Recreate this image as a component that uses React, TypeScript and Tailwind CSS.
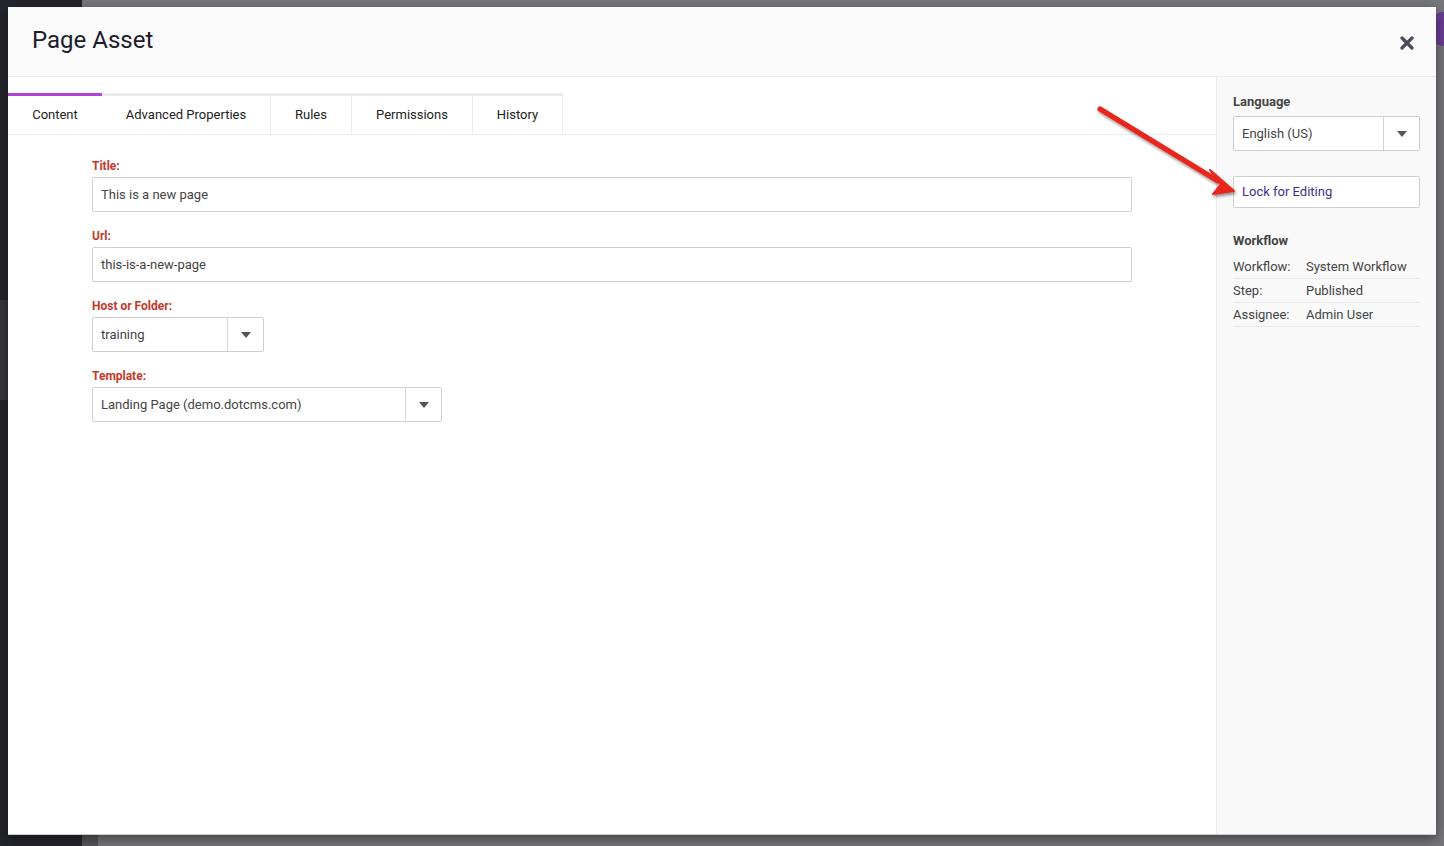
import React from 'react';

const font = { fontFamily: 'Roboto, "Noto Sans", sans-serif' };

const Caret = () => (
  <svg width="10" height="6" viewBox="0 0 10 6" className="fill-[#555]">
    <path d="M0 0h10L5 6z" />
  </svg>
);

const Field = ({ label, children }: { label: string; children: React.ReactNode }) => (
  <div className="mb-[17px]">
    <div className="text-[12px] font-bold text-[#c7392b] leading-[14px] mb-[4px]">{label}</div>
    {children}
  </div>
);

const TextInput = ({ value }: { value: string }) => (
  <div className="h-[35px] w-[1040px] border border-[#cfcfcf] rounded-[2px] bg-white flex items-center px-[8px] text-[13px] text-[#444]">
    {value}
  </div>
);

const Select = ({ value, width, btn }: { value: string; width: string; btn: string }) => (
  <div className={`h-[35px] ${width} border border-[#cfcfcf] rounded-[2px] bg-white flex text-[13px] text-[#444]`}>
    <div className="flex-1 flex items-center px-[8px]">{value}</div>
    <div className={`${btn} border-l border-[#d6d6d6] flex items-center justify-center`}>
      <Caret />
    </div>
  </div>
);

const tabs = ['Content', 'Advanced Properties', 'Rules', 'Permissions', 'History'];
const tabW = ['w-[94px]', 'w-[169px]', 'w-[81px]', 'w-[121px]', 'w-[90px]'];

const App = () => {
  return (
    <div className="relative w-[1444px] h-[846px] overflow-hidden" style={font}>
      {/* backdrop */}
      <div className="absolute inset-0 flex">
        <div className="w-[82px] bg-[#25252d]" />
        <div className="flex-1 bg-[#77777c]" />
      </div>
      <div className="absolute left-0 top-[300px] w-[8px] h-[100px] bg-[#35353b]" />
      <div className="absolute right-[-14px] top-[12px] w-[28px] h-[34px] rounded-full bg-[#6b3f94]" />
      <div className="absolute left-[82px] bottom-0 w-[16px] h-[11px] bg-[#58585c]" />

      {/* dialog */}
      <div className="absolute left-[8px] top-[7px] w-[1428px] h-[828px] bg-white flex flex-col shadow-[0_4px_12px_rgba(0,0,0,0.45)] border-b border-[#ccc]">
        <div className="h-[70px] shrink-0 bg-[#fafafa] border-b border-[#ececec] flex items-center justify-between pl-[24px] pr-[22px]">
          <div className="text-[24px] text-[#1c1c2c] leading-none pb-[4px]">Page Asset</div>
          <svg width="14" height="14" viewBox="0 0 14 14" className="stroke-[#4c4c58] mt-[3px]">
            <path d="M2 2L12 12M12 2L2 12" strokeWidth="3.2" strokeLinecap="round" />
          </svg>
        </div>
        <div className="flex flex-1">
          <div className="flex-1 bg-white">
            <div className="mt-[16px] border-b border-[#ececec] flex">
              {tabs.map((t, i) => (
                <div
                  key={t}
                  className={`${tabW[i]} h-[41px] border-t-[3px] ${i === 0 ? 'border-t-[#b044d8]' : 'border-t-[#ebebeb] border-r border-r-[#ececec]'} flex items-center justify-center text-[13px] text-[#222]`}
                >
                  {t}
                </div>
              ))}
            </div>
            <div className="pl-[84px] pt-[24px]">
              <Field label="Title:">
                <TextInput value="This is a new page" />
              </Field>
              <Field label="Url:">
                <TextInput value="this-is-a-new-page" />
              </Field>
              <Field label="Host or Folder:">
                <Select value="training" width="w-[172px]" btn="w-[36px]" />
              </Field>
              <Field label="Template:">
                <Select value="Landing Page (demo.dotcms.com)" width="w-[350px]" btn="w-[36px]" />
              </Field>
            </div>
          </div>
          <div className="w-[220px] bg-[#f9f9f9] border-l border-[#ececec] pl-[16px] pr-[16px] pt-[17px] text-[#444]">
            <div className="text-[13px] leading-[15px] font-bold text-[#444] mb-[7px]">Language</div>
            <Select value="English (US)" width="w-[187px]" btn="w-[36px]" />
            <div className="mt-[25px] h-[32px] w-[187px] border border-[#cfcfcf] rounded-[2px] bg-white flex items-center px-[8px] text-[13px] text-[#3f2e8c]">
              Lock for Editing
            </div>
            <div className="mt-[25px] text-[13px] leading-[15px] font-bold text-[#444] mb-[7px]">Workflow</div>
            {[
              ['Workflow:', 'System Workflow'],
              ['Step:', 'Published'],
              ['Assignee:', 'Admin User'],
            ].map(([k, v]) => (
              <div key={k} className="flex h-[24px] items-center border-b border-[#e8e8e8] text-[13px] text-[#444] w-[187px]">
                <div className="w-[73px]">{k}</div>
                <div>{v}</div>
              </div>
            ))}
          </div>
        </div>
      </div>

      {/* annotation arrow */}
      <svg className="absolute left-0 top-0 pointer-events-none" width="1444" height="846">
        <defs>
          <filter id="sh" x="-20%" y="-20%" width="140%" height="140%">
            <feDropShadow dx="1" dy="2" stdDeviation="1.5" floodColor="#000" floodOpacity="0.45" />
          </filter>
        </defs>
        <g filter="url(#sh)">
          <path d="M1100 109L1218 181" stroke="#e8261c" strokeWidth="5" strokeLinecap="round" />
          <path d="M1234 191L1210 170L1221 184L1213 194Z" fill="#e8261c" stroke="#e8261c" strokeWidth="2" strokeLinejoin="round" />
        </g>
      </svg>
    </div>
  );
};

export default App;
